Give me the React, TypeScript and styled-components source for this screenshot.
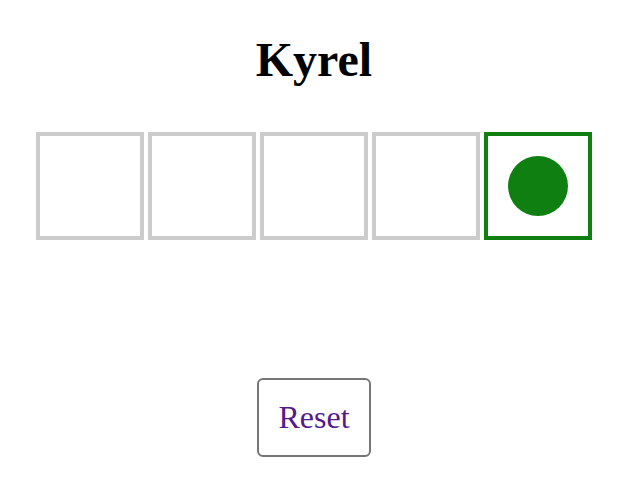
import React from "react";
import styled, { createGlobalStyle } from "styled-components";

const Global = createGlobalStyle`
  html, body { margin: 0; padding: 0; background: #fff; }
  body { font-family: "Liberation Serif", "Times New Roman", serif; }
`;

const Page = styled.div`
  display: flex;
  flex-direction: column;
  align-items: center;
  padding: 32px 2px 0 0;
`;

const Title = styled.h1`
  margin: 0 0 45px;
  font-size: 48px;
  line-height: 55px;
  font-weight: bold;
  color: #000;
`;

const Row = styled.div`
  display: flex;
  gap: 4px;
`;

const Cell = styled.div<{ $active?: boolean }>`
  box-sizing: border-box;
  width: 108px;
  height: 108px;
  border: 4px solid ${(p) => (p.$active ? "#107f12" : "#cccccc")};
  display: flex;
  align-items: center;
  justify-content: center;
`;

const Dot = styled.div`
  width: 60px;
  height: 60px;
  border-radius: 50%;
  background: #107f12;
`;

const ResetButton = styled.button`
  margin-top: 138px;
  box-sizing: border-box;
  width: 114px;
  height: 79px;
  border: 2px solid #767676;
  border-radius: 6px;
  background: #fff;
  font-family: "Liberation Serif", "Times New Roman", serif;
  font-size: 32px;
  color: #551a8b;
  padding: 0;
  cursor: pointer;
`;

export default function App() {
  const cells = [false, false, false, false, true];
  return (
    <>
      <Global />
      <Page>
        <Title>Kyrel</Title>
        <Row>
          {cells.map((a, i) => (
            <Cell key={i} $active={a}>
              {a && <Dot />}
            </Cell>
          ))}
        </Row>
        <ResetButton>Reset</ResetButton>
      </Page>
    </>
  );
}
